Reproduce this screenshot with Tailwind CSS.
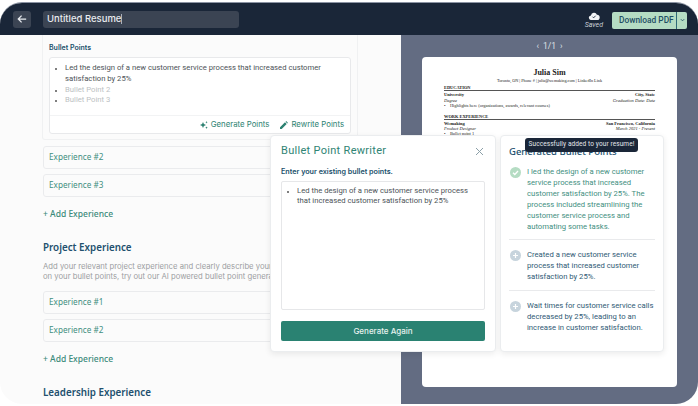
<!DOCTYPE html>
<html lang="en">
<head>
  <meta charset="utf-8" />
  <title>Untitled Resume</title>
  <script src="https://cdn.jsdelivr.net/npm/@tailwindcss/browser@4"></script>
</head>
<body class="bg-white font-['Roboto',sans-serif] antialiased">
  <div class="relative w-[698px] h-[406px] overflow-hidden">
    <!-- app window -->
    <div class="flex flex-col h-[402px] mt-[2px] rounded-[22px] overflow-hidden border-t border-[#8b93a3] bg-[#fbfbfb]">
      <!-- top bar -->
      <header class="flex items-center h-[32px] shrink-0 bg-[#1a2638] pl-[13px] pr-[11px]">
        <button class="flex items-center justify-center w-[18px] h-[17px] rounded-[3px] bg-[#3b4453]">
          <svg class="w-[10px] h-[10px]" viewBox="0 0 12 12" fill="none" stroke="#e8ebef" stroke-width="1.5"><path d="M11 6H1.500M5.500 2 1.500 6l4 4" /></svg>
        </button>
        <div class="flex items-center ml-[12px] w-[196px] h-[17px] rounded-[3px] bg-[#3b4453] px-[4px] font-['Inter',sans-serif] text-[9.500px] font-medium text-[#e9ebef]">
          Untitled Resume<span class="w-px h-[10px] bg-[#aab0ba]"></span>
        </div>
        <div class="flex flex-col items-center ml-auto mr-[9px] mt-[3px]">
          <svg class="w-[12px] h-[8px]" viewBox="0 0 12 9"><path fill="#f4f5f7" d="M3 9a2.600 2.600 0 0 1-.4-5.200A3.500 3.500 0 0 1 9.300 3 3 3 0 0 1 9.500 9z" /><path fill="none" stroke="#1a2638" d="M4.300 5.300l1.300 1.300 2.200-2.400" /></svg>
          <span class="text-[7px] leading-[8px] mt-[1px] italic text-[#c9ced6]">Saved</span>
        </div>
        <div class="flex h-[17px] mt-[2px] rounded-[2px] bg-[#b5dcc3] text-[#1f4e63]">
          <span class="flex items-center pl-[7px] w-[65px] border-r border-[#2f6a78] text-[8.400px] font-medium whitespace-nowrap">Download PDF</span>
          <span class="flex items-center justify-center w-[10px]">
            <svg class="w-[5px] h-[4px]" viewBox="0 0 6 4" fill="none" stroke="#1f4e63" stroke-width="1"><path d="M1 1l2 2 2-2" /></svg>
          </span>
        </div>
      </header>

      <div class="flex flex-1 min-h-0">
        <!-- editor column -->
        <main class="w-[401px] shrink-0 overflow-hidden pl-[43px] pr-[44px]">
          <section class="h-[105px] rounded-b-[3px] border border-t-0 border-[#f0f1f2] -mx-px px-[6px] pt-[8px]">
            <h3 class="font-['Inter',sans-serif] text-[7px] leading-[10px] font-semibold text-[#20506b]">Bullet Points</h3>
            <div class="mt-[4px] h-[77px] rounded-[3px] border border-[#e8e9eb] bg-white flex flex-col">
              <ul class="flex-1 pl-[15px] pr-[8px] pt-[5px] list-disc marker:text-[5px] marker:text-[#555] text-[7.700px] leading-[10.800px] text-[#4d5358]">
                <li>Led the design of a new customer service process that increased customer satisfaction by 25%</li>
                <li class="text-[#bcbfc3]">Bullet Point 2</li>
                <li class="text-[#bcbfc3]">Bullet Point 3</li>
              </ul>
              <div class="flex items-center justify-end gap-[11px] h-[18px] border-t border-[#f2f3f4] pr-[6px] font-['Inter',sans-serif] text-[7.800px] text-[#2d8272]">
                <span class="flex items-center gap-[3px]">
                  <svg class="w-[8px] h-[8px]" viewBox="0 0 8 8" fill="#2d8272"><path d="M3 1 3.900 3.100 6 4 3.900 4.900 3 7 2.100 4.900 0 4 2.100 3.100zM6.500 0l.4.900.9.400-.9.300-.4 1-.4-1-.9-.3.900-.4zM6.500 5.400l.4.800.9.400-.9.300-.4 1-.4-1-.9-.3.900-.4z" /></svg>
                  Generate Points
                </span>
                <span class="flex items-center gap-[3px]">
                  <svg class="w-[8px] h-[8px]" viewBox="0 0 8 8" fill="#2d8272"><path d="M0 8V6.300L5 1.300 6.700 3 1.700 8zM5.600.7 6.200.1l1.700 1.700-.6.600z" /></svg>
                  Rewrite Points
                </span>
              </div>
            </div>
          </section>

          <div class="mt-[6px] flex flex-col gap-[5px]">
            <div class="flex items-center h-[23px] rounded-[3px] border border-[#eaebed] pl-[5px] font-['Noto_Sans',sans-serif] text-[8.200px] text-[#3f8f7f]">Experience #2</div>
            <div class="flex items-center h-[23px] rounded-[3px] border border-[#eaebed] pl-[5px] font-['Noto_Sans',sans-serif] text-[8.200px] text-[#3f8f7f]">Experience #3</div>
          </div>
          <p class="mt-[11px] font-['Noto_Sans',sans-serif] text-[8.500px] leading-[12px] font-medium text-[#3a8a7a]">+ Add Experience</p>

          <h2 class="mt-[21px] font-['Noto_Sans',sans-serif] text-[9.800px] leading-[14px] font-semibold text-[#22506e]">Project Experience</h2>
          <p class="mt-[7px] w-[330px] font-['Inter',sans-serif] text-[7.700px] leading-[10px] text-[#9b9ea2]">Add your relevant project experience and clearly describe your role and impact. For help<br />on your bullet points, try out our AI powered bullet point generator tool here today.</p>

          <div class="mt-[9px] flex flex-col gap-[5px]">
            <div class="flex items-center h-[23px] rounded-[3px] border border-[#eaebed] pl-[5px] font-['Noto_Sans',sans-serif] text-[8.200px] text-[#3f8f7f]">Experience #1</div>
            <div class="flex items-center h-[23px] rounded-[3px] border border-[#eaebed] pl-[5px] font-['Noto_Sans',sans-serif] text-[8.200px] text-[#3f8f7f]">Experience #2</div>
          </div>
          <p class="mt-[11px] font-['Noto_Sans',sans-serif] text-[8.500px] leading-[12px] font-medium text-[#3a8a7a]">+ Add Experience</p>

          <h2 class="mt-[21px] font-['Noto_Sans',sans-serif] text-[9.800px] leading-[14px] font-semibold text-[#22506e]">Leadership Experience</h2>
        </main>

        <!-- pdf preview column -->
        <aside class="flex-1 bg-[#636c82] flex flex-col items-center">
          <div class="flex items-center justify-center gap-[4px] h-[22px] w-full text-[8.500px] text-[#dfe2e7]">
            <span>‹</span><span>1/1</span><span>›</span>
          </div>
          <div class="w-[255px] h-[330px] rounded-[4px] bg-white px-[22px] pt-[11px] font-['Liberation_Serif',serif] text-[#222]">
            <p class="text-center text-[8px] leading-[10px] font-bold">Julia Sim</p>
            <p class="text-center text-[4.200px] leading-[6px]">Toronto, ON | Phone # | julia@wemaking.com | LinkedIn Link</p>
            <p class="mt-[1px] text-[4.400px] leading-[5px] font-bold border-b border-[#555]">EDUCATION</p>
            <div class="flex justify-between text-[4.500px] leading-[5.500px] font-bold mt-px"><span>University</span><span>City, State</span></div>
            <div class="flex justify-between text-[4.500px] leading-[5px] italic"><span>Degree</span><span>Graduation Date: Date</span></div>
            <p class="text-[4.400px] leading-[6px]">•&nbsp;&nbsp;&nbsp;&nbsp;Highlights here (organizations, awards, relevant courses)</p>
            <p class="mt-[5px] text-[4.400px] leading-[5px] font-bold border-b border-[#555]">WORK EXPERIENCE</p>
            <div class="flex justify-between text-[4.500px] leading-[5.500px] font-bold mt-px"><span>Wemaking</span><span>San Francisco, California</span></div>
            <div class="flex justify-between text-[4.500px] leading-[5px] italic"><span>Product Designer</span><span>March 2021 - Present</span></div>
            <p class="text-[4.400px] leading-[6px]">•&nbsp;&nbsp;&nbsp;&nbsp;Bullet point 1</p>
          </div>
        </aside>
      </div>
    </div>

    <!-- rewriter dialog -->
    <div class="absolute left-[270px] top-[135px] w-[226px] h-[217px] flex flex-col rounded-[4px] border border-[#ebedef] bg-white px-[10px] shadow-[0_2px_6px_rgba(0,0,0,0.08)]">
      <div class="flex items-center justify-between pt-[6px] h-[24px]">
        <h2 class="text-[11px] tracking-[0.3px] text-[#2f8474]">Bullet Point Rewriter</h2>
        <svg class="w-[9px] h-[9px] mr-[1px]" viewBox="0 0 9 9" fill="none" stroke="#8ca0a8" stroke-width="1"><path d="M1 1l7 7M8 1 1 8" /></svg>
      </div>
      <p class="mt-[7px] font-['Inter',sans-serif] text-[7.200px] leading-[10px] font-semibold text-[#20506b]">Enter your existing bullet points.</p>
      <div class="mt-[4px] h-[129px] rounded-[2px] border border-[#e6e7e9] pl-[15px] pr-[10px] pt-[4px]">
        <ul class="list-disc marker:text-[5px] marker:text-[#555] text-[7.700px] leading-[9.500px] text-[#4d5358]">
          <li>Led the design of a new customer service process that increased customer satisfaction by 25%</li>
        </ul>
      </div>
      <button class="mt-[11px] h-[20px] rounded-[2px] bg-[#2a8272] font-['Inter',sans-serif] text-[8px] font-medium text-[#e7f2ef]">Generate Again</button>
    </div>

    <!-- generated results -->
    <div class="absolute left-[500px] top-[135px] w-[164px] h-[217px] rounded-[4px] border border-[#ebedef] bg-white px-[8px] pt-[9px] shadow-[0_2px_6px_rgba(0,0,0,0.08)]">
      <h3 class="font-['Noto_Sans',sans-serif] text-[9.500px] leading-[13px] font-medium text-[#22506e]">Generated Bullet Points</h3>
      <div class="flex gap-[6px] mt-[8px] pb-[7px] border-b border-[#e9eaec]">
        <svg class="w-[11px] h-[11px] shrink-0 mt-[1px] ml-[1px]" viewBox="0 0 11 11"><circle cx="5.500" cy="5.500" r="5.500" fill="#b5dcc3" /><path d="M3 5.700l1.800 1.800L8 4" fill="none" stroke="#fff" stroke-width="1.300" /></svg>
        <p class="text-[7.700px] leading-[11px] text-[#3f8f7f]">I led the design of a new customer service process that increased customer satisfaction by 25%. The process included streamlining the customer service process and automating some tasks.</p>
      </div>
      <div class="flex gap-[6px] mt-[9px] pb-[8px] border-b border-[#e9eaec]">
        <svg class="w-[11px] h-[11px] shrink-0 mt-[1px] ml-[1px]" viewBox="0 0 11 11"><circle cx="5.500" cy="5.500" r="5.500" fill="#c7d4dd" /><path d="M5.500 3v5M3 5.500h5" fill="none" stroke="#fff" stroke-width="1.200" /></svg>
        <p class="w-[124px] text-[7.700px] leading-[11px] text-[#2f5a75]">Created a new customer service process that increased customer satisfaction by 25%.</p>
      </div>
      <div class="flex gap-[6px] mt-[9px]">
        <svg class="w-[11px] h-[11px] shrink-0 mt-[1px] ml-[1px]" viewBox="0 0 11 11"><circle cx="5.500" cy="5.500" r="5.500" fill="#c7d4dd" /><path d="M5.500 3v5M3 5.500h5" fill="none" stroke="#fff" stroke-width="1.200" /></svg>
        <p class="text-[7.700px] leading-[11px] text-[#2f5a75]">Wait times for customer service calls decreased by 25%, leading to an increase in customer satisfaction.</p>
      </div>
    </div>

    <!-- toast -->
    <div class="absolute left-[525px] top-[138px] w-[113px] h-[14px] flex items-center justify-center rounded-[3px] bg-[#1a2638] text-[6.500px] tracking-[0.1px] text-[#e4e7eb] whitespace-nowrap">Successfully added to your resume!</div>
  </div>
</body>
</html>
